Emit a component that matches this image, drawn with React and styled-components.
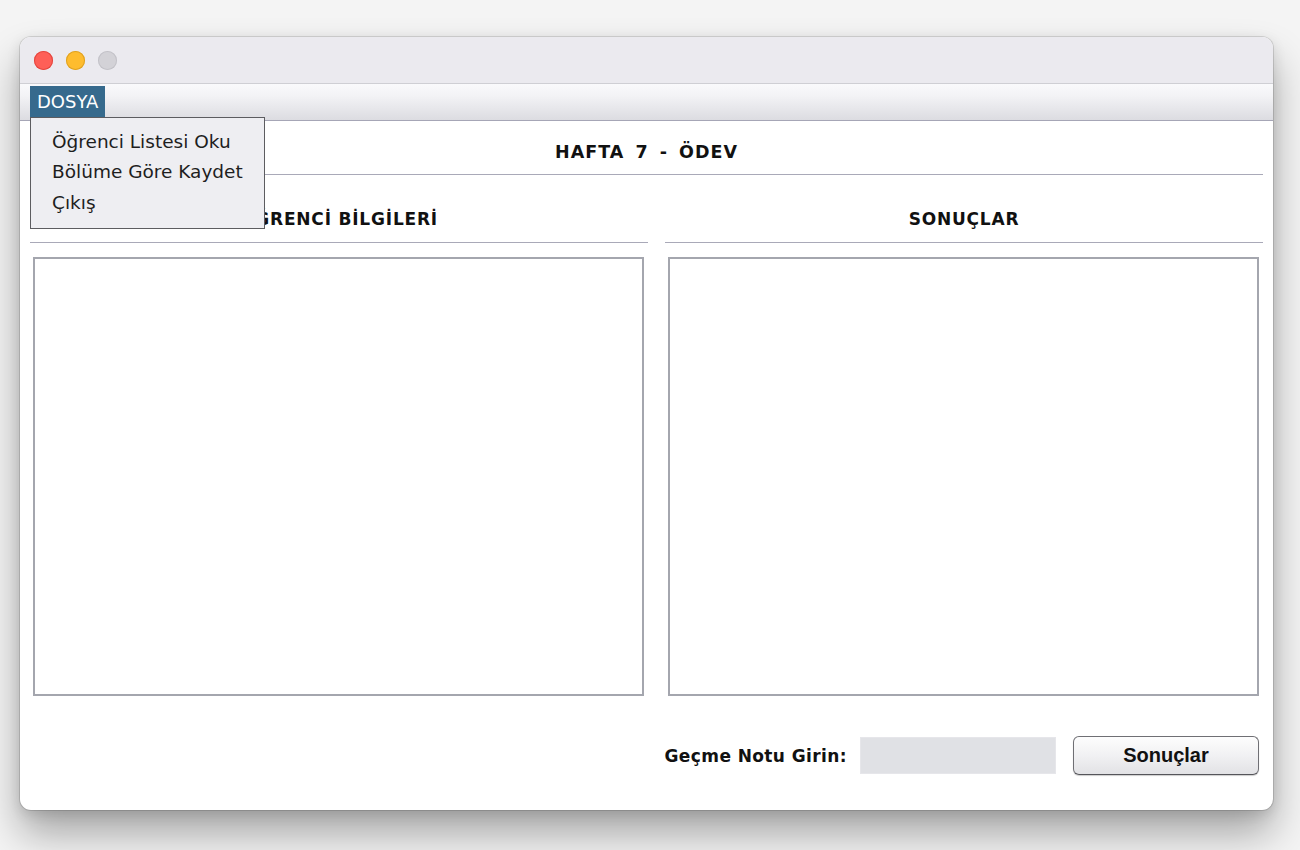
import React from "react";
import styled, { createGlobalStyle } from "styled-components";

const Global = createGlobalStyle`
  html, body { margin: 0; padding: 0; }
  body {
    background: #f4f4f4;
    width: 1300px;
    height: 850px;
    overflow: hidden;
    font-family: "DejaVu Sans", "Open Sans", sans-serif;
  }
`;

const Stage = styled.div`
  padding: 37px 27px 0 20px;
`;

const Window = styled.div`
  position: relative;
  width: 1253px;
  height: 773px;
  border-radius: 11px;
  background: #ffffff;
  box-shadow: 0 0 0 1px rgba(0,0,0,0.12), 0 24px 40px rgba(0,0,0,0.32), 0 4px 14px rgba(0,0,0,0.12);
  display: flex;
  flex-direction: column;
  overflow: hidden;
`;

const TitleBar = styled.div`
  height: 46px;
  background: #ebeaef;
  border-bottom: 1px solid #cfcfd4;
  display: flex;
  align-items: center;
  gap: 13px;
  padding-left: 14px;
  flex-shrink: 0;
`;

const Light = styled.span`
  width: 19px;
  height: 19px;
  border-radius: 50%;
  background: ${(p) => p.$color};
  box-shadow: inset 0 0 0 1px ${(p) => p.$edge};
`;

const MenuBar = styled.div`
  height: 34px;
  background: linear-gradient(#fafafc 0%, #f2f2f5 35%, #dcdce1 100%);
  border-bottom: 1px solid #a6a6b6;
  display: flex;
  align-items: flex-start;
  padding: 2px 0 0 10px;
  box-sizing: content-box;
  flex-shrink: 0;
`;

const MenuItem = styled.div`
  height: 31px;
  padding: 0 7px;
  display: flex;
  align-items: center;
  background: ${(p) => (p.$active ? "#366a8d" : "transparent")};
  color: ${(p) => (p.$active ? "#ffffff" : "#1a1a1a")};
  font-size: 18px;
`;

const Dropdown = styled.div`
  position: absolute;
  left: 10px;
  top: 80px;
  width: 235px;
  height: 112px;
  box-sizing: border-box;
  background: #eeeef2;
  border: 1px solid #5c5c60;
  display: flex;
  flex-direction: column;
  padding-top: 8px;
  z-index: 5;
`;

const DropItem = styled.div`
  height: 30.5px;
  display: flex;
  align-items: center;
  padding-left: 21px;
  font-size: 18.5px;
  color: #1e1e1e;
`;

const Content = styled.div`
  flex: 1;
  display: flex;
  flex-direction: column;
  padding: 0 10px;
`;

const MainTitle = styled.div`
  padding: 19px 0 10px;
  line-height: 24px;
  text-align: center;
  font-weight: bold;
  font-size: 17.5px;
  letter-spacing: 1px;
  word-spacing: 4px;
  color: #111;
  border-bottom: 1px solid #a9a9b8;
`;

const Columns = styled.div`
  display: grid;
  grid-template-columns: 618px 598px;
  column-gap: 17px;
`;

const Column = styled.div`
  display: flex;
  flex-direction: column;
`;

const SectionTitle = styled.div`
  padding: 32px 0 11px;
  line-height: 24px;
  text-align: center;
  font-weight: bold;
  font-size: 17px;
  letter-spacing: 0.8px;
  color: #111;
  border-bottom: 1px solid #a9a9b8;
`;

const ListBox = styled.div`
  margin: 14px ${(p) => p.$right}px 0 3px;
  height: 439px;
  box-sizing: border-box;
  border: 2px solid #a4a6ae;
  background: #ffffff;
`;

const Footer = styled.div`
  display: flex;
  justify-content: flex-end;
  align-items: center;
  padding: 40px 4px 0 0;
`;

const Label = styled.span`
  font-weight: bold;
  font-size: 17px;
  letter-spacing: 0.4px;
  color: #111;
  margin-right: 13px;
`;

const Input = styled.div`
  width: 196px;
  height: 37px;
  background: #e0e1e5;
  border: 1px solid #e6e6ea;
  box-sizing: border-box;
  margin-right: 17px;
`;

const Button = styled.button`
  width: 186px;
  height: 39px;
  border-radius: 6px;
  border: 1px solid #6f6f74;
  border-bottom-color: #55555a;
  background: linear-gradient(#fdfdfd 0%, #f1f1f3 50%, #e2e2e5 100%);
  box-shadow: 0 1px 1px rgba(0,0,0,0.2);
  font-family: "Liberation Sans", Arial, sans-serif;
  font-weight: bold;
  font-size: 20px;
  color: #111;
  padding: 0;
`;

export default function App() {
  return (
    <>
      <Global />
      <Stage>
        <Window>
          <TitleBar>
            <Light $color="#fe5f57" $edge="#e2463f" />
            <Light $color="#febc2e" $edge="#dea123" />
            <Light $color="#d3d2d7" $edge="#c3c2c8" />
          </TitleBar>
          <MenuBar>
            <MenuItem $active>DOSYA</MenuItem>
          </MenuBar>
          <Content>
            <MainTitle>HAFTA 7 - ÖDEV</MainTitle>
            <Columns>
              <Column>
                <SectionTitle>ÖĞRENCİ BİLGİLERİ</SectionTitle>
                <ListBox $right={4} />
              </Column>
              <Column>
                <SectionTitle>SONUÇLAR</SectionTitle>
                <ListBox $right={4} />
              </Column>
            </Columns>
            <Footer>
              <Label>Geçme Notu Girin:</Label>
              <Input />
              <Button>Sonuçlar</Button>
            </Footer>
          </Content>
          <Dropdown>
            <DropItem>Öğrenci Listesi Oku</DropItem>
            <DropItem>Bölüme Göre Kaydet</DropItem>
            <DropItem>Çıkış</DropItem>
          </Dropdown>
        </Window>
      </Stage>
    </>
  );
}
